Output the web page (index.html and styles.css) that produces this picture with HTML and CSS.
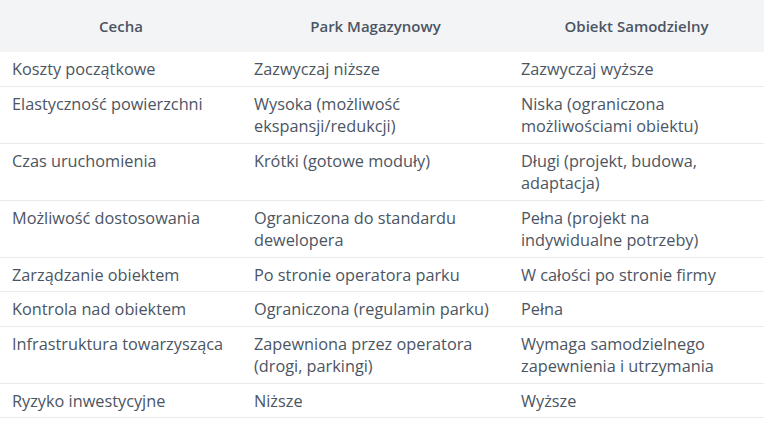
FILE: index.html
```html
<!DOCTYPE html>
<html lang="pl">
<head>
<meta charset="utf-8">
<link rel="stylesheet" href="styles.css">
</head>
<body>
<table class="cmp">
  <colgroup>
    <col class="c1"><col class="c2"><col class="c3">
  </colgroup>
  <thead>
    <tr><th>Cecha</th><th>Park Magazynowy</th><th>Obiekt Samodzielny</th></tr>
  </thead>
  <tbody>
    <tr><td>Koszty początkowe</td><td>Zazwyczaj niższe</td><td>Zazwyczaj wyższe</td></tr>
    <tr><td>Elastyczność powierzchni</td><td>Wysoka (możliwość ekspansji/redukcji)</td><td>Niska (ograniczona możliwościami obiektu)</td></tr>
    <tr><td>Czas uruchomienia</td><td>Krótki (gotowe moduły)</td><td>Długi (projekt, budowa, adaptacja)</td></tr>
    <tr><td>Możliwość dostosowania</td><td>Ograniczona do standardu dewelopera</td><td>Pełna (projekt na indywidualne potrzeby)</td></tr>
    <tr><td>Zarządzanie obiektem</td><td>Po stronie operatora parku</td><td>W całości po stronie firmy</td></tr>
    <tr><td>Kontrola nad obiektem</td><td>Ograniczona (regulamin parku)</td><td>Pełna</td></tr>
    <tr><td>Infrastruktura towarzysząca</td><td>Zapewniona przez operatora (drogi, parkingi)</td><td>Wymaga samodzielnego zapewnienia i utrzymania</td></tr>
    <tr><td>Ryzyko inwestycyjne</td><td>Niższe</td><td>Wyższe</td></tr>
  </tbody>
</table>
</body>
</html>
```

FILE: styles.css
```css
html, body {
  margin: 0;
  padding: 0;
  background: #ffffff;
}
body {
  font-family: "Open Sans", "Noto Sans", sans-serif;
  color: #4b5563;
}
.cmp {
  width: 764px;
  border-collapse: collapse;
  table-layout: fixed;
  font-size: 16.3px;
}
.c1 { width: 242px; }
.c2 { width: 267px; }
.c3 { width: 255px; }
.cmp th {
  background: #f3f4f6;
  color: #4b5563;
  font-weight: 600;
  font-size: 15px;
  text-align: center;
  height: 52px;
  padding: 0 12px;
  box-sizing: border-box;
}
.cmp td {
  padding: 6px 12px 5px;
  line-height: 22.5px;
  vertical-align: top;
  border-bottom: 1px solid #e8eaee;
  text-align: left;
}
```
